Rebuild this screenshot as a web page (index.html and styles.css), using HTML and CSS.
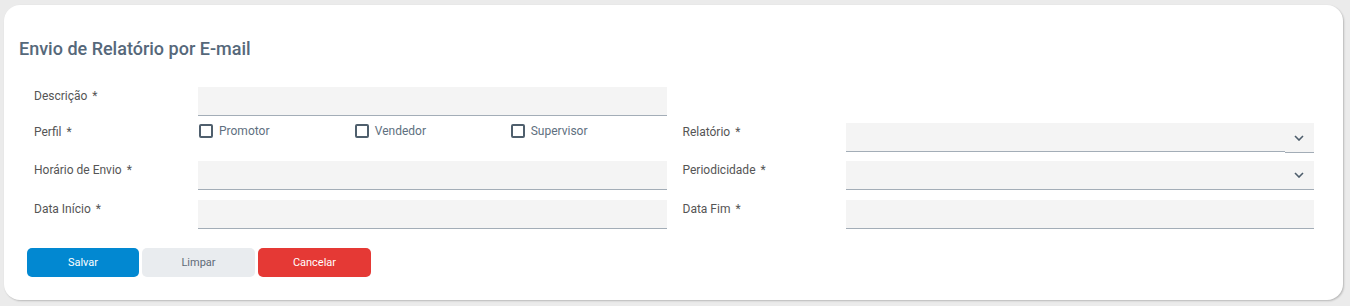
FILE: index.html
```html
<!DOCTYPE html>
<html>
<head>
  <meta charset="utf-8">
  <title>Envio de Relatório por E-mail</title>
  <link rel="stylesheet" href="styles.css">
</head>
<body>
  <div class="card">
    <h2 class="card-title">Envio de Relatório por E-mail</h2>

    <form class="report-form">
      <div class="form-grid">
        <!-- linha 1 -->
        <label class="field-label">Descrição <span class="req">*</span></label>
        <div class="field"><input type="text" class="text-input"></div>
        <div class="field-label"></div>
        <div class="field"></div>

        <!-- linha 2 -->
        <label class="field-label">Perfil <span class="req">*</span></label>
        <div class="field checks">
          <label class="check"><span class="box"></span>Promotor</label>
          <label class="check"><span class="box"></span>Vendedor</label>
          <label class="check"><span class="box"></span>Supervisor</label>
        </div>
        <label class="field-label right">Relatório <span class="req">*</span></label>
        <div class="field select">
          <span class="select-value"></span>
          <span class="select-arrow">
            <svg width="10" height="6" viewBox="0 0 10 6"><path d="M1 1l4 4 4-4" fill="none" stroke="#4d5d6b" stroke-width="1.6"/></svg>
          </span>
        </div>

        <!-- linha 3 -->
        <label class="field-label">Horário de Envio <span class="req">*</span></label>
        <div class="field"><input type="text" class="text-input"></div>
        <label class="field-label right">Periodicidade <span class="req">*</span></label>
        <div class="field select plain">
          <span class="select-value"></span>
          <span class="select-arrow">
            <svg width="10" height="6" viewBox="0 0 10 6"><path d="M1 1l4 4 4-4" fill="none" stroke="#4d5d6b" stroke-width="1.6"/></svg>
          </span>
        </div>

        <!-- linha 4 -->
        <label class="field-label">Data Início <span class="req">*</span></label>
        <div class="field"><input type="text" class="text-input"></div>
        <label class="field-label right">Data Fim <span class="req">*</span></label>
        <div class="field"><input type="text" class="text-input"></div>
      </div>

      <div class="actions">
        <button type="button" class="btn btn-primary">Salvar</button>
        <button type="button" class="btn btn-light">Limpar</button>
        <button type="button" class="btn btn-danger">Cancelar</button>
      </div>
    </form>
  </div>
</body>
</html>
```

FILE: styles.css
```css
body {
  margin: 0;
  background-color: #ebebeb;
  font-family: Roboto, "Liberation Sans", Arial, sans-serif;
  padding: 5px 7px 6px 4px;
}

.card {
  background-color: #fff;
  border-radius: 16px;
  box-shadow: 1px 1px 2px rgba(0, 0, 0, 0.22);
  height: 295px;
  box-sizing: border-box;
  padding: 33px 15px 0 15px;
}

.card-title {
  margin: 0;
  font-size: 18px;
  font-weight: 500;
  color: #56687a;
  line-height: 22px;
}

.report-form {
  margin-top: 27px;
}

/* form grid */
.form-grid {
  display: grid;
  grid-template-columns: 164px 1fr 179px 1fr;
  grid-template-rows: 36px 38px 39px 30px;
  margin: 0 14px 0 15px;
}

.field-label {
  font-size: 12px;
  color: #555;
  line-height: 16px;
  padding-top: 1px;
}

.field-label .req {
  margin-left: 2px;
}

.field-label.right {
  padding-left: 16px;
}

.field {
  height: 29px;
}

.text-input {
  width: 100%;
  height: 29px;
  box-sizing: border-box;
  border: none;
  border-bottom: 1px solid #a3adb7;
  background-color: #f4f4f4;
  outline: none;
  margin: 0;
  padding: 0 10px;
  font-family: inherit;
}

/* checkboxes */
.checks {
  display: grid;
  grid-template-columns: repeat(3, 1fr);
  padding-left: 1px;
}

.check {
  display: flex;
  align-items: flex-start;
  font-size: 12px;
  color: #607080;
  line-height: 16px;
}

.box {
  width: 10px;
  height: 10px;
  border: 2px solid #4f5f6d;
  border-radius: 2px;
  margin: 1px 6px 0 0;
  flex-shrink: 0;
}

/* selects */
.select {
  display: flex;
  background-color: #f4f4f4;
}

.select-value {
  flex: 1;
  border-bottom: 1px solid #a3adb7;
}

.select-arrow {
  width: 29px;
  display: flex;
  align-items: center;
  justify-content: center;
  padding-right: 1px;
  box-sizing: border-box;
  border-bottom: 1px solid #a3adb7;
  margin-bottom: -1px;
}

.select.plain .select-arrow {
  margin-bottom: 0;
}

/* buttons */
.actions {
  display: flex;
  gap: 3px;
  margin: 18px 0 0 8px;
}

.btn {
  width: 113px;
  height: 29px;
  border: none;
  border-radius: 5px;
  font-family: inherit;
  font-size: 11px;
  font-weight: 400;
  cursor: pointer;
}

.btn-primary {
  background-color: #0288d1;
  color: #fff;
  width: 112px;
}

.btn-light {
  background-color: #e9ecef;
  color: #5f6b77;
}

.btn-danger {
  background-color: #e53935;
  color: #fff;
}
```
